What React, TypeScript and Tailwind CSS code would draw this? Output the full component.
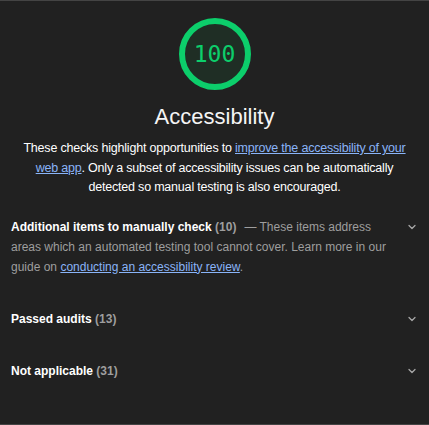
import { ChevronDown } from 'lucide-react'

const groups = [
  { title: 'Passed audits', count: 13 },
  { title: 'Not applicable', count: 31 },
]

function Gauge({ score }: { score: number }) {
  const r = 33
  const c = 2 * Math.PI * r
  return (
    <div className="relative w-[72px] h-[72px]">
      <svg viewBox="0 0 72 72" className="absolute inset-0 w-full h-full -rotate-90">
        <circle cx="36" cy="36" r={r} fill="#1f2e25" stroke="#0cce6b" strokeWidth="6" strokeDasharray={`${c} ${c}`} />
      </svg>
      <div className="absolute inset-0 flex items-center justify-center text-[23px] text-[#0cce6b] font-['DejaVu_Sans_Mono',monospace]">
        {score}
      </div>
    </div>
  )
}

export default function App() {
  return (
    <div className="relative w-[429px] h-[425px] bg-[#212121] border-t border-b border-[#444] font-['Liberation_Sans',Arial,sans-serif] overflow-hidden">
      {/* active tab marker */}
      <div className="absolute -top-px left-[125px] w-[60px] h-px bg-white" />

      <div className="flex flex-col items-center pt-[17px]">
        <Gauge score={100} />
        <h1 className="mt-[13px] text-[22px] leading-[28px] text-[#f5f5f5]">Accessibility</h1>
        <p className="mt-[8px] px-[20px] text-center text-[12.5px] tracking-[-0.2px] leading-[19.5px] text-white">
          These checks highlight opportunities to{' '}
          <a className="text-[#8ab4f8] underline">improve the accessibility of your web app</a>. Only a subset
          of accessibility issues can be automatically detected so manual testing is also encouraged.
        </p>
      </div>

      <div className="mt-[19px] px-[11px] text-[12px] leading-[20px]">
        <div className="flex items-start gap-2">
          <div className="flex-1 text-[#9e9e9e]">
            <span className="font-bold text-white">Additional items to manually check</span>{' '}
            <span className="font-bold">(10)</span>
            <span className="ml-2">— These items address areas which an automated testing tool cannot cover. Learn more in our guide on </span>
            <a className="text-[#8ab4f8] underline">conducting an accessibility review</a>.
          </div>
          <ChevronDown className="mt-[4px] w-[12px] h-[12px] text-[#a8a8a8]" strokeWidth={2.5} />
        </div>

        {groups.map((g) => (
          <div key={g.title} className="flex items-start gap-2 mt-[32px]">
            <div className="flex-1">
              <span className="font-bold text-white">{g.title}</span>{' '}
              <span className="font-bold text-[#9e9e9e]">({g.count})</span>
            </div>
            <ChevronDown className="mt-[4px] w-[12px] h-[12px] text-[#a8a8a8]" strokeWidth={2.5} />
          </div>
        ))}
      </div>
    </div>
  )
}
